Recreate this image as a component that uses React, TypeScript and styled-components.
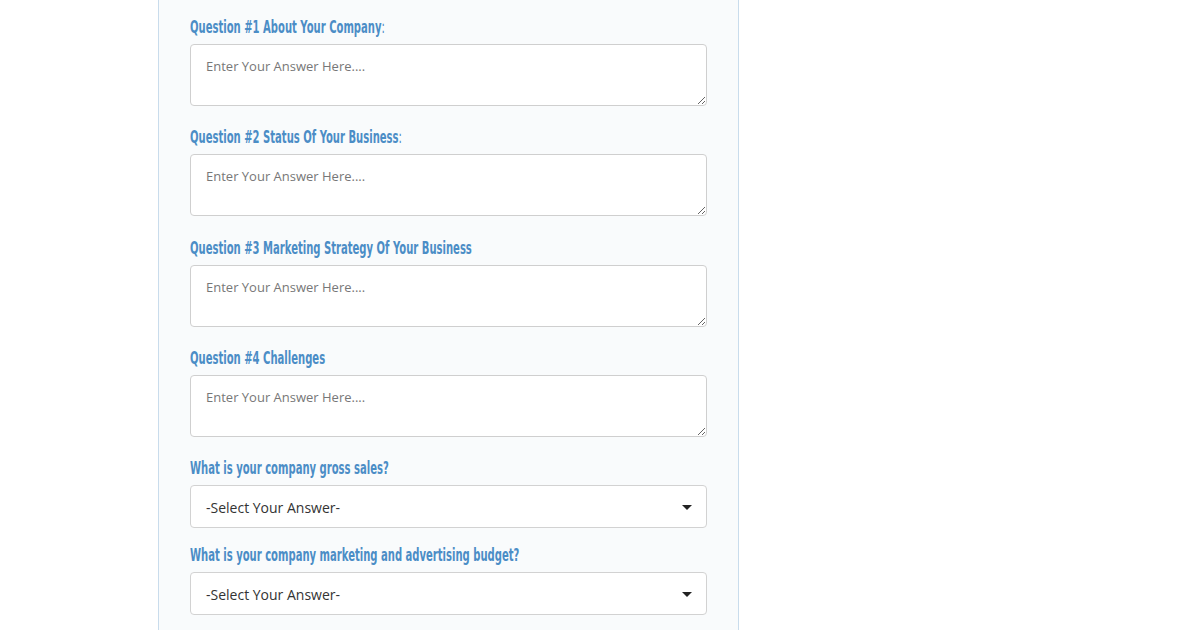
import React from "react";
import styled, { createGlobalStyle } from "styled-components";

const Global = createGlobalStyle`
  html, body { margin: 0; padding: 0; background: #ffffff; }
  body { font-family: "Open Sans", "Noto Sans", sans-serif; }
  * { box-sizing: border-box; }
`;

const Page = styled.div`
  width: 1200px;
  height: 630px;
  overflow: hidden;
  display: flex;
  background: #ffffff;
`;

const Panel = styled.form`
  margin-left: 158px;
  width: 581px;
  min-height: 630px;
  padding: 15px 31px 0 31px;
  background: #f9fbfc;
  border-left: 1px solid #c9dcec;
  border-right: 1px solid #c9dcec;
  display: flex;
  flex-direction: column;
`;

const Field = styled.div<{ $gap: number }>`
  display: flex;
  flex-direction: column;
  margin-bottom: ${(p) => p.$gap}px;
`;

const Label = styled.label`
  display: block;
  height: 22px;
  padding-top: 1px;
  margin-bottom: 7px;
  white-space: nowrap;
`;

const LabelText = styled.span`
  display: inline-block;
  font-family: "DejaVu Sans", sans-serif;
  font-weight: 700;
  font-size: 17px;
  line-height: 22px;
  color: #4b8dc6;
  transform: scaleX(0.59);
  transform-origin: 0 50%;
`;

const Colon = styled.span`
  font-weight: 400;
`;

const TextArea = styled.textarea`
  width: 517px;
  height: 62px;
  padding: 12px 15px;
  border: 1px solid #cfcfcf;
  border-radius: 4px;
  background: #ffffff;
  font-family: "Open Sans", "Noto Sans", sans-serif;
  font-size: 13px;
  line-height: 18px;
  color: #333;
  resize: vertical;
  outline: none;
  &::placeholder { color: #777777; }
`;

const SelectBox = styled.div`
  width: 517px;
  height: 43px;
  border: 1px solid #d2d2d2;
  border-radius: 4px;
  background: #ffffff;
  display: flex;
  align-items: center;
  padding: 1px 14px 0 15px;
  font-family: "Open Sans", "Noto Sans", sans-serif;
  font-size: 14px;
  color: #333333;
`;

const SelectText = styled.span`
  flex: 1;
`;

const Caret = styled.span`
  width: 0;
  height: 0;
  border-left: 5px solid transparent;
  border-right: 5px solid transparent;
  border-top: 5px solid #222;
`;

const questions = [
  { text: "Question #1 About Your Company", colon: true },
  { text: "Question #2 Status Of Your Business", colon: true },
  { text: "Question #3 Marketing Strategy Of Your Business", colon: false },
  { text: "Question #4 Challenges", colon: false },
];

const selects = [
  "What is your company gross sales?",
  "What is your company marketing and advertising budget?",
];

export default function App() {
  return (
    <>
      <Global />
      <Page>
        <Panel onSubmit={(e) => e.preventDefault()}>
          {questions.map((q) => (
            <Field key={q.text} $gap={19.35}>
              <Label>
                <LabelText>
                  {q.text}
                  {q.colon && <Colon>:</Colon>}
                </LabelText>
              </Label>
              <TextArea placeholder="Enter Your Answer Here...." />
            </Field>
          ))}
          {selects.map((s) => (
            <Field key={s} $gap={15}>
              <Label>
                <LabelText>{s}</LabelText>
              </Label>
              <SelectBox>
                <SelectText>-Select Your Answer-</SelectText>
                <Caret />
              </SelectBox>
            </Field>
          ))}
        </Panel>
      </Page>
    </>
  );
}
